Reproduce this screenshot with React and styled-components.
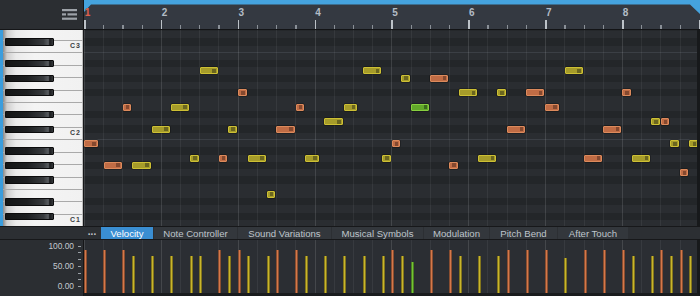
import React from 'react';
import styled, { createGlobalStyle } from 'styled-components';

const GlobalStyle = createGlobalStyle`
  html, body {
    margin: 0;
    padding: 0;
    background: #1b1d20;
  }
  body {
    font-family: "Liberation Sans", Arial, sans-serif;
  }
`;

// timeline geometry (px)
const BAR = 76.85;
const BEAT = BAR / 4;
const STEP = BAR / 16;
const ROW = 7.27;

const COLORS = {
  o: { border: '#dc8a5c', fill: '#c06c45', dark: '#85492f', vel: '#d5784a' },
  y: { border: '#cdc034', fill: '#a69c2a', dark: '#6b661f', vel: '#c9b62c' },
  g: { border: '#88d040', fill: '#62a82a', dark: '#3b6a1c', vel: '#74c434' },
};

// [step, length in steps, row, colour, velocity height]
const NOTES = [
  [0, 3, 15, 'o'], [4, 4, 18, 'o'], [8, 2, 10, 'o'], [10, 4, 18, 'y'], [14, 4, 13, 'y'],
  [18, 4, 10, 'y'], [22, 2, 17, 'y'], [24, 4, 5, 'y'], [28, 2, 17, 'o'], [30, 2, 13, 'y'],
  [32, 2, 8, 'o'], [34, 4, 17, 'y'], [38, 2, 22, 'y'], [40, 4, 13, 'o'], [44, 2, 10, 'o'],
  [46, 3, 17, 'y'], [50, 4, 12, 'y'], [54, 3, 10, 'y'], [58, 4, 5, 'y'], [62, 2, 17, 'y'],
  [64, 2, 15, 'o'], [66, 2, 6, 'y'], [68, 4, 10, 'g'], [72, 4, 6, 'o'], [76, 2, 18, 'o'],
  [78, 4, 8, 'y'], [82, 4, 17, 'y'], [86, 2, 8, 'y'], [88, 4, 13, 'o'], [92, 4, 8, 'o'],
  [96, 3, 10, 'o'], [100, 4, 5, 'y', 35], [104, 4, 17, 'o'], [108, 4, 13, 'o'], [112, 2, 8, 'o'],
  [114, 4, 17, 'y'], [118, 2, 12, 'y'], [120, 2, 12, 'o'], [122, 2, 15, 'y'], [124, 2, 19, 'o'],
  [126, 2, 15, 'y'],
];

const VEL = { o: 43, y: 37.5, g: 31 };

const ROWS = Array.from({ length: 28 }, (_, k) => {
  const n = (((2 - k) % 12) + 12) % 12;
  return { black: [1, 3, 6, 8, 10].includes(n), c: n === 0 };
});

const WHITE_KEYS = ['D', 'C3', 'B', 'A', 'G', 'F', 'E', 'D', 'C2', 'B', 'A', 'G', 'F', 'E', 'D', 'C1', 'B'];
const BLACK_ROWS = [1, 4, 6, 8, 11, 13, 16, 18, 20, 23, 25];

const TABS = [
  ['Velocity', 52],
  ['Note Controller', 83],
  ['Sound Variations', 93],
  ['Musical Symbols', 91],
  ['Modulation', 65],
  ['Pitch Bend', 67],
  ['After Touch', 70],
];

const Editor = styled.div`
  display: grid;
  grid-template-columns: 84px 616px;
  grid-template-rows: 30px 196px 14px 56px;
  width: 700px;
  height: 296px;
  overflow: hidden;
  background: #1b1d20;
`;

const Corner = styled.div`
  box-sizing: border-box;
  display: flex;
  align-items: center;
  justify-content: flex-end;
  padding: 0 6px 1px 0;
  background: #2b2e32;
  border-right: 1px solid #151618;
  border-bottom: 1px solid #151618;
`;

const Ruler = styled.div`
  position: relative;
  box-sizing: border-box;
  background: #343941;
  border-bottom: 1px solid #131416;
  overflow: hidden;
`;

const LoopBar = styled.svg`
  position: absolute;
  left: 0;
  top: 0;
`;

const BarNumber = styled.span`
  position: absolute;
  top: 8px;
  font-size: 10px;
  line-height: 10px;
  font-weight: bold;
  color: ${(p) => (p.$first ? '#e0604c' : '#b3bcc6')};
`;

const Tick = styled.div`
  position: absolute;
  bottom: 0;
  width: ${(p) => (p.$major ? 1.6 : 1.2)}px;
  height: ${(p) => (p.$major ? 9 : 4.5)}px;
  background: ${(p) => (p.$major ? '#bcc2c8' : '#8a9097')};
`;

const Keyboard = styled.div`
  position: relative;
  box-sizing: border-box;
  display: flex;
  flex-direction: column;
  overflow: hidden;
  background: #f2f2f2;
  border-left: 3px solid #3b9ddd;
  border-right: 1px solid #17181a;
`;

const WhiteKey = styled.div`
  flex: 0 0 auto;
  box-sizing: border-box;
  height: 12.43px;
  display: flex;
  align-items: flex-end;
  justify-content: flex-end;
  padding: 0 1px 3px 0;
  border-bottom: 1px solid #a9a9a9;
  border-right: 1px solid #bdbdbd;
  background: linear-gradient(to right, #8a8a8a 0px, #cfcfcf 4px, #ebebeb 13px, #f4f4f4 40%, #f1f1f1 100%);
  &:first-child {
    margin-top: -1.56px;
  }
`;

const KeyLabel = styled.span`
  font-size: 7px;
  line-height: 7px;
  font-weight: bold;
  letter-spacing: 1px;
  color: #3a3d42;
`;

const BlackKey = styled.div`
  position: absolute;
  left: 1.5px;
  width: 49.5px;
  height: 7.3px;
  box-sizing: border-box;
  border: 1px solid #0c0c0d;
  border-radius: 0 1px 1px 0;
  background: linear-gradient(to right, #141516 0%, #1d1f21 45%, #383b3e 80%, #5a5e62 90%, #1a1b1d 93%, #34373a 100%);
`;

const Grid = styled.div`
  position: relative;
  box-sizing: border-box;
  display: flex;
  flex-direction: column;
  padding-top: 1px;
  overflow: hidden;
  background: #25282b;
  border-right: 3px solid #17191b;
`;

const Row = styled.div`
  flex: 0 0 auto;
  box-sizing: border-box;
  height: ${ROW}px;
  background: ${(p) => (p.$black ? '#232629' : '#2a2d31')};
  border-bottom: 1px solid ${(p) => (p.$c ? '#3b3f45' : 'transparent')};
`;

const VLine = styled.div`
  position: absolute;
  top: 0;
  bottom: 0;
  width: 1px;
  background: ${(p) => (p.$bar ? 'rgba(255,255,255,0.12)' : 'rgba(255,255,255,0.06)')};
`;

const Note = styled.div`
  position: absolute;
  box-sizing: border-box;
  height: 7px;
  border: 1px solid ${(p) => COLORS[p.$c].border};
  border-radius: 1px;
  background: ${(p) => COLORS[p.$c].fill};
  box-shadow: 0 0 0 0.5px rgba(0, 0, 0, 0.5);
  &::after {
    content: '';
    position: absolute;
    top: 0.5px;
    bottom: 0.5px;
    right: 1px;
    width: 3.5px;
    background: ${(p) => COLORS[p.$c].dark};
  }
`;

const TabBar = styled.div`
  grid-column: 1 / -1;
  box-sizing: border-box;
  display: flex;
  align-items: stretch;
  gap: 1px;
  padding-left: 84px;
  background: #2c2f33;
  border-top: 1px solid #17181a;
  border-bottom: 1px solid #17181a;
`;

const Dots = styled.span`
  width: 16px;
  text-align: center;
  font-size: 10px;
  line-height: 10px;
  font-weight: bold;
  color: #c2c7cc;
`;

const Tab = styled.div`
  box-sizing: border-box;
  width: ${(p) => p.$w}px;
  display: flex;
  align-items: center;
  justify-content: center;
  font-size: 9.6px;
  color: ${(p) => (p.$active ? '#ffffff' : '#bfc5cb')};
  background: ${(p) => (p.$active ? '#3a8ed2' : '#33373c')};
  white-space: nowrap;
`;

const VelScale = styled.div`
  box-sizing: border-box;
  display: flex;
  justify-content: flex-end;
  gap: 4px;
  padding-right: 2px;
  background: #2b2e32;
  border-right: 1px solid #151618;
`;

const ScaleLabels = styled.div`
  display: flex;
  flex-direction: column;
  justify-content: space-between;
  align-items: flex-end;
  padding: 2px 0 6px;
  font-size: 8.4px;
  line-height: 8px;
  color: #c4c9ce;
`;

const ScaleTicks = styled.div`
  display: flex;
  flex-direction: column;
  justify-content: space-between;
  padding: 5.5px 0 9px;
`;

const ScaleTick = styled.div`
  width: 3px;
  height: 1px;
  background: #9aa0a6;
`;

const Lane = styled.div`
  position: relative;
  box-sizing: border-box;
  overflow: hidden;
  background: #2b2e33;
  border-right: 3px solid #17191b;
  border-bottom: 3px solid #1a1c1e;
`;

const VelBar = styled.div`
  position: absolute;
  bottom: 0;
  width: 3px;
  box-sizing: border-box;
  background: ${(p) => COLORS[p.$c].vel};
  border-left: 0.5px solid rgba(0, 0, 0, 0.35);
  border-right: 0.5px solid rgba(0, 0, 0, 0.35);
`;

const MenuIcon = () => (
  <svg width="15" height="11" viewBox="0 0 15 11">
    <g fill="#9da2a8">
      <rect x="0" y="0" width="15" height="2.2" />
      <rect x="0" y="4.3" width="4" height="2.2" />
      <rect x="5.5" y="4.3" width="9.5" height="2.2" />
      <rect x="0" y="8.6" width="15" height="2.2" />
    </g>
  </svg>
);

const beats = Array.from({ length: 33 }, (_, i) => i);

export default function App() {
  return (
    <>
      <GlobalStyle />
      <Editor>
        <Corner>
          <MenuIcon />
        </Corner>

        <Ruler>
          <LoopBar width="616" height="16" viewBox="0 0 616 16">
            <path d="M0 0 H616 V14 L606 4.6 H7 L0 12 Z" fill="#45a3de" />
          </LoopBar>
          {Array.from({ length: 8 }, (_, b) => (
            <BarNumber key={'n' + b} $first={b === 0} style={{ left: b * BAR + 0.8 }}>
              {b + 1}
            </BarNumber>
          ))}
          {beats.map((i) => (
            <Tick key={'t' + i} $major={i % 4 === 0} style={{ left: i * BEAT }} />
          ))}
        </Ruler>

        <Keyboard>
          {WHITE_KEYS.map((k, i) => (
            <WhiteKey key={i}>
              {k.length > 1 && <KeyLabel>{'C' + k[1]}</KeyLabel>}
            </WhiteKey>
          ))}
          {BLACK_ROWS.map((r) => (
            <BlackKey key={r} style={{ top: 1 + r * ROW }} />
          ))}
        </Keyboard>

        <Grid>
          {ROWS.map((r, k) => (
            <Row key={k} $black={r.black} $c={r.c} />
          ))}
          {beats.map((i) => (
            <VLine key={i} $bar={i % 4 === 0} style={{ left: i * BEAT }} />
          ))}
          {NOTES.map(([s, len, row, c], i) => (
            <Note
              key={i}
              $c={c}
              style={{ left: s * STEP + 0.3, top: 1 + row * ROW, width: len * STEP - 1 }}
            />
          ))}
        </Grid>

        <TabBar>
          <Dots>...</Dots>
          {TABS.map(([label, w], i) => (
            <Tab key={label} $w={w} $active={i === 0}>
              {label}
            </Tab>
          ))}
        </TabBar>

        <VelScale>
          <ScaleLabels>
            <span>100.00</span>
            <span>50.00</span>
            <span>0.00</span>
          </ScaleLabels>
          <ScaleTicks>
            {Array.from({ length: 7 }, (_, i) => (
              <ScaleTick key={i} />
            ))}
          </ScaleTicks>
        </VelScale>

        <Lane>
          {beats.map((i) => (
            <VLine key={i} $bar={i % 4 === 0} style={{ left: i * BEAT }} />
          ))}
          {NOTES.map(([s, , , c, v], i) => (
            <VelBar key={i} $c={c} style={{ left: s * STEP, height: v || VEL[c] }} />
          ))}
        </Lane>
      </Editor>
    </>
  );
}
